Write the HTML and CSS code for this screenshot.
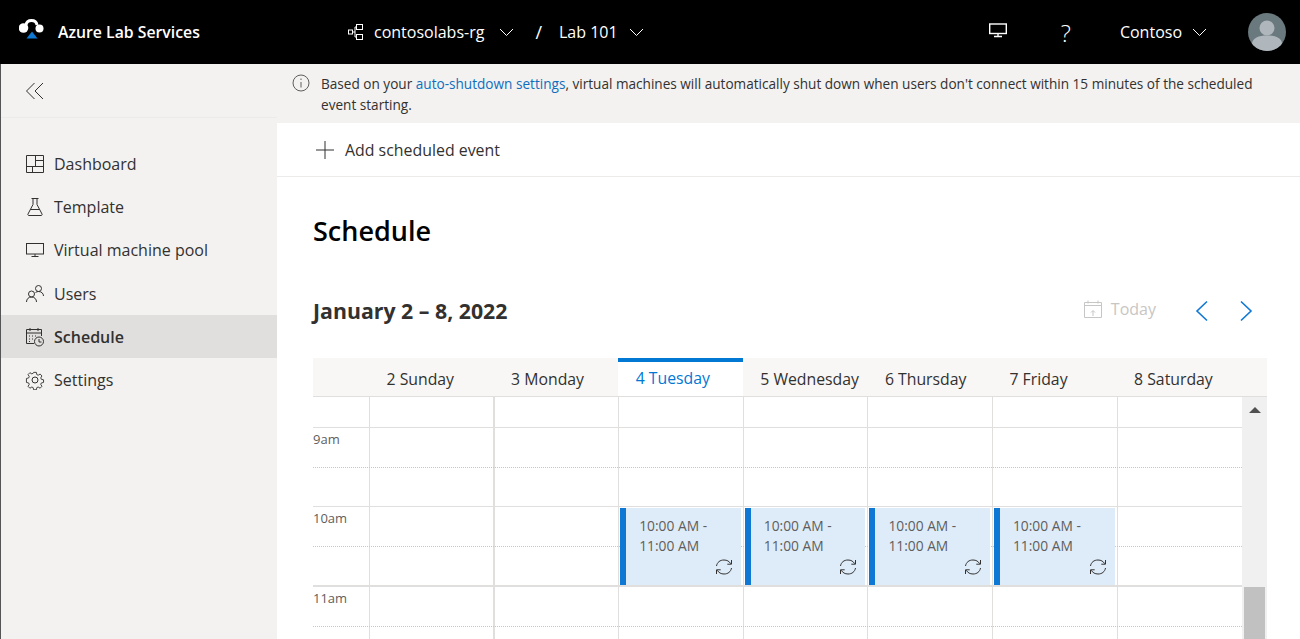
FILE: index.html
```html
<!DOCTYPE html>
<html lang="en">
<head>
  <meta charset="UTF-8">
  <meta name="viewport" content="width=device-width, initial-scale=1.0">
  <title>Azure Lab Services - Schedule</title>
  <link rel="stylesheet" href="styles.css">
</head>
<body>

  <header class="topbar">
    <div class="brand">
      <svg class="brand-logo" width="26" height="20" viewBox="0 0 26 20">
        <circle cx="4.500" cy="9" r="4.800" fill="#fff"/>
        <circle cx="20.500" cy="9.500" r="4" fill="#fff"/>
        <path d="M7 6C7.500 2.800 9.500 1.500 12.500 1.500S17.500 2.800 18 6" fill="none" stroke="#fff" stroke-width="3"/>
        <path d="M13 12.500L18.500 19.500H7.500Z" fill="#0f78d4"/>
      </svg>
      <span class="brand-name">Azure Lab Services</span>
    </div>
    <nav class="crumbs">
      <svg class="crumb-icon" width="18" height="18" viewBox="0 0 18 18" fill="none" stroke="#fff">
        <rect x="9.500" y="1.500" width="6" height="5"/>
        <rect x="9.500" y="11.500" width="6" height="5"/>
        <rect x="1.500" y="7" width="4" height="4"/>
        <path d="M5.500 9H8M8 4V14M8 4H9.500M8 14H9.500"/>
      </svg>
      <span>contosolabs-rg</span>
      <svg class="chevron" width="15" height="9" viewBox="0 0 15 9"><path d="M1 1l6.500 6.500L14 1"/></svg>
      <span class="crumb-sep">/</span>
      <span>Lab 101</span>
      <svg class="chevron chevron-tight" width="15" height="9" viewBox="0 0 15 9"><path d="M1 1l6.500 6.500L14 1"/></svg>
    </nav>
    <div class="topbar-right">
      <svg class="monitor" width="18" height="15" viewBox="0 0 18 15" fill="none" stroke="#fff">
        <rect x="0.700" y="1" width="16.600" height="9.500" stroke-width="1.400"/>
        <path d="M9 11v2M5 13.500h8" stroke-width="1.400"/>
      </svg>
      <span class="help">?</span>
      <span class="tenant">Contoso</span>
      <svg class="chevron" width="15" height="9" viewBox="0 0 15 9"><path d="M1 1l6.500 6.500L14 1"/></svg>
      <div class="avatar">
        <svg width="38" height="38" viewBox="0 0 38 38">
          <circle cx="19" cy="15" r="7.500" fill="#b0b7bc"/>
          <path d="M4 38V31C4 25 11 22.500 19 22.500S34 25 34 31V38Z" fill="#b0b7bc"/>
        </svg>
      </div>
    </div>
  </header>

  <div class="layout">
    <aside class="sidebar">
      <div class="collapse-row">
        <svg width="20" height="18" viewBox="0 0 20 18" fill="none" stroke="#323130">
          <path d="M9.500 1L1.500 9l8 8M18 1l-8 8 8 8"/>
        </svg>
      </div>
      <ul class="nav-list">
        <li class="nav-item">
          <svg class="nav-icon" width="20" height="20" viewBox="0 0 20 20" fill="none" stroke="#323130">
            <path d="M1.500 1.500h17v17h-17zM1.500 12.500h17M10.500 1.500v11M10.500 6.500h8M7.500 12.500v6"/>
          </svg>
          <span>Dashboard</span>
        </li>
        <li class="nav-item">
          <svg class="nav-icon" width="20" height="20" viewBox="0 0 20 20" fill="none" stroke="#323130">
            <path d="M6.500 1.500h7M8 1.500v6L3 17a1 1 0 0 0 1 1.500h12a1 1 0 0 0 1-1.500L12 7.500v-6M5.500 12.500h9"/>
          </svg>
          <span>Template</span>
        </li>
        <li class="nav-item">
          <svg class="nav-icon" width="20" height="20" viewBox="0 0 20 20" fill="none" stroke="#323130">
            <rect x="1.500" y="3.500" width="17" height="10.500"/>
            <path d="M10 14v3M6.500 16.500h7"/>
          </svg>
          <span>Virtual machine pool</span>
        </li>
        <li class="nav-item">
          <svg class="nav-icon" width="20" height="20" viewBox="0 0 20 20" fill="none" stroke="#323130">
            <circle cx="13.500" cy="4.500" r="3"/>
            <circle cx="6.500" cy="10" r="3"/>
            <path d="M1.500 18c0-3 2-5 5-5s5 2 5 5M10.500 8.500c1-.7 2-1 3-1 3 0 5 2 5 4.500"/>
          </svg>
          <span>Users</span>
        </li>
        <li class="nav-item nav-item-active">
          <svg class="nav-icon" width="20" height="20" viewBox="0 0 20 20" fill="none" stroke="#323130">
            <path d="M9 16.500H1.500v-14h15V9M1.500 6h15M5 1v3M13 1v3"/>
            <path d="M4 9h1M7 9h1M10 9h1M4 12h1M7 12h1M4 14.500h1" stroke-dasharray="1 1"/>
            <circle cx="14" cy="14.500" r="4.500"/>
            <path d="M14 12v3h2.500"/>
          </svg>
          <span>Schedule</span>
        </li>
        <li class="nav-item">
          <svg class="nav-icon" width="20" height="20" viewBox="0 0 20 20" fill="none" stroke="#323130">
            <circle cx="10" cy="10" r="3"/>
            <path d="M8.500 1.500h3l.5 2.500 1.500.7 2.200-1.300 2 2.100-1.300 2.200.6 1.500 2.500.6v2.900l-2.500.6-.6 1.500 1.300 2.200-2 2.100-2.200-1.300-1.500.7-.5 2.400h-3l-.5-2.400-1.500-.7-2.200 1.300-2-2.100 1.300-2.200-.6-1.500-2.500-.6V8.300l2.500-.6.600-1.500-1.300-2.200 2-2.100 2.200 1.300 1.500-.7z" transform="translate(1 1) scale(.9)"/>
          </svg>
          <span>Settings</span>
        </li>
      </ul>
    </aside>

    <main class="content">
      <div class="info-bar">
        <svg class="info-icon" width="18" height="18" viewBox="0 0 18 18" fill="none" stroke="#605e5c">
          <circle cx="9" cy="9" r="8"/>
          <path d="M9 8v5.500M9 4.500v1.500"/>
        </svg>
        <p>Based on your <a href="#">auto-shutdown settings</a>, virtual machines will automatically shut down when users don't connect within 15 minutes of the scheduled event starting.</p>
      </div>

      <div class="toolbar">
        <svg width="20" height="20" viewBox="0 0 20 20" stroke="#323130"><path d="M10 1v18M1 10h18"/></svg>
        <span>Add scheduled event</span>
      </div>

      <section class="schedule">
        <h1>Schedule</h1>
        <div class="week-bar">
          <h2>January 2 – 8, 2022</h2>
          <div class="today">
            <svg width="18" height="18" viewBox="0 0 18 18" fill="none" stroke="#c8c6c4">
              <path d="M.5 2.500h17v15H.5zM.5 5.500h17M4 .5v3M14 .5v3M9 16v-5M7 12.500l2-2 2 2"/>
            </svg>
            <span>Today</span>
          </div>
          <div class="week-arrows">
            <svg width="14" height="22" viewBox="0 0 14 22" fill="none" stroke="#0f78d4" stroke-width="1.600"><path d="M12 1.500L2 11l10 9.500"/></svg>
            <svg width="14" height="22" viewBox="0 0 14 22" fill="none" stroke="#0f78d4" stroke-width="1.600"><path d="M2 1.500L12 11 2 20.500"/></svg>
          </div>
        </div>

        <div class="calendar">
          <div class="day-header">
            <div class="day-gutter"></div>
            <div class="day-name">2 Sunday</div>
            <div class="day-name">3 Monday</div>
            <div class="day-name day-today">4 Tuesday</div>
            <div class="day-name">5 Wednesday</div>
            <div class="day-name">6 Thursday</div>
            <div class="day-name">7 Friday</div>
            <div class="day-name">8 Saturday</div>
          </div>
          <div class="calendar-body">
            <div class="grid-scroll">
              <div class="hour-row hour-top">
                <div class="time"></div>
                <div class="cell cell-sep"></div><div class="cell"></div><div class="cell"></div><div class="cell"></div><div class="cell"></div><div class="cell"></div><div class="cell"></div>
              </div>
              <div class="hour-row">
                <div class="time">9am</div>
                <div class="cell cell-sep"></div><div class="cell"></div><div class="cell"></div><div class="cell"></div><div class="cell"></div><div class="cell"></div><div class="cell"></div>
              </div>
              <div class="hour-row hour-row-thick">
                <div class="time">10am</div>
                <div class="cell cell-sep"></div>
                <div class="cell"></div>
                <div class="cell">
                  <div class="event">10:00 AM - 11:00 AM
                    <svg class="event-repeat" width="18" height="18" viewBox="0 0 18 18" fill="none" stroke="#323130"><path d="M1.500 8C2.200 4.200 5 2 9 2c3 0 5.300 1.300 6.700 3.700M16.500 10c-.7 3.800-3.500 6-7.500 6-3 0-5.300-1.300-6.700-3.700M16.500 2v4.200h-4.200M1.500 16v-4.200h4.200"/></svg>
                  </div>
                </div>
                <div class="cell">
                  <div class="event">10:00 AM - 11:00 AM
                    <svg class="event-repeat" width="18" height="18" viewBox="0 0 18 18" fill="none" stroke="#323130"><path d="M1.500 8C2.200 4.200 5 2 9 2c3 0 5.300 1.300 6.700 3.700M16.500 10c-.7 3.800-3.500 6-7.500 6-3 0-5.300-1.300-6.700-3.700M16.500 2v4.200h-4.200M1.500 16v-4.200h4.200"/></svg>
                  </div>
                </div>
                <div class="cell">
                  <div class="event">10:00 AM - 11:00 AM
                    <svg class="event-repeat" width="18" height="18" viewBox="0 0 18 18" fill="none" stroke="#323130"><path d="M1.500 8C2.200 4.200 5 2 9 2c3 0 5.300 1.300 6.700 3.700M16.500 10c-.7 3.800-3.500 6-7.500 6-3 0-5.300-1.300-6.700-3.700M16.500 2v4.200h-4.200M1.500 16v-4.200h4.200"/></svg>
                  </div>
                </div>
                <div class="cell">
                  <div class="event">10:00 AM - 11:00 AM
                    <svg class="event-repeat" width="18" height="18" viewBox="0 0 18 18" fill="none" stroke="#323130"><path d="M1.500 8C2.200 4.200 5 2 9 2c3 0 5.300 1.300 6.700 3.700M16.500 10c-.7 3.800-3.500 6-7.500 6-3 0-5.300-1.300-6.700-3.700M16.500 2v4.200h-4.200M1.500 16v-4.200h4.200"/></svg>
                  </div>
                </div>
                <div class="cell"></div>
              </div>
              <div class="hour-row">
                <div class="time">11am</div>
                <div class="cell cell-sep"></div><div class="cell"></div><div class="cell"></div><div class="cell"></div><div class="cell"></div><div class="cell"></div><div class="cell"></div>
              </div>
            </div>
            <div class="scrollbar">
              <div class="scroll-up"></div>
              <div class="scroll-track"></div>
              <div class="scroll-thumb"></div>
            </div>
          </div>
        </div>
      </section>
    </main>
  </div>

</body>
</html>
```

FILE: styles.css
```css
html, body {
  height: 100%;
}

body {
  margin: 0;
  overflow: hidden;
  font-family: "Open Sans", "Noto Sans", sans-serif;
  color: #323130;
  background-color: #fff;
}

h1, h2, p, ul {
  margin: 0;
  padding: 0;
}

svg {
  display: block;
  flex: none;
}

/* top bar */
.topbar {
  display: flex;
  align-items: center;
  height: 64px;
  background-color: #000;
  color: #fff;
  font-size: 16px;
}

.brand {
  display: flex;
  align-items: center;
  width: 347px;
  padding-left: 19px;
  box-sizing: border-box;
}

.brand-logo {
  margin: 0 13px 6px 0;
}

.brand-name {
  font-weight: 600;
  font-size: 15.8px;
}

.crumbs {
  display: flex;
  align-items: center;
}

.crumb-icon {
  margin-right: 9px;
}

.chevron {
  fill: none;
  stroke: #fff;
}

.crumbs .chevron {
  margin-left: 15px;
}

.crumbs .chevron-tight {
  margin-left: 11px;
}

.crumb-sep {
  margin: 0 17px 0 21px;
  font-size: 18px;
}

.topbar-right {
  display: flex;
  align-items: center;
  margin-left: auto;
  padding-right: 14px;
}

.monitor {
  margin-bottom: 3px;
}

.help {
  margin: 0 49px 0 54px;
  font-size: 24px;
  font-weight: 300;
}

.tenant {
  margin-right: 10px;
}

.avatar {
  width: 38px;
  height: 38px;
  margin-left: 41px;
  border-radius: 50%;
  overflow: hidden;
  background-color: #69797e;
}

/* sidebar */
.layout {
  display: flex;
  height: calc(100% - 64px);
}

.sidebar {
  width: 277px;
  flex: none;
  box-sizing: border-box;
  border-left: 1px solid #555;
  background-color: #f3f2f1;
}

.collapse-row {
  display: flex;
  align-items: center;
  height: 53px;
  padding-left: 24px;
  border-bottom: 1px solid #edebe9;
}

.nav-list {
  list-style: none;
  padding-top: 24px;
}

.nav-item {
  display: flex;
  align-items: center;
  gap: 9px;
  height: 43.3px;
  padding-left: 24px;
  font-size: 16px;
}

.nav-item-active {
  background-color: #e1dfdd;
  font-weight: 600;
}

/* main area */
.content {
  flex: 1;
  min-width: 0;
}

.info-bar {
  display: flex;
  height: 59px;
  box-sizing: border-box;
  padding: 10px 30px 0 15px;
  background-color: #f3f2f1;
  font-size: 13.6px;
  line-height: 20.5px;
}

.info-icon {
  margin-right: 11px;
}

.info-bar a {
  color: #106ebe;
  text-decoration: none;
}

.toolbar {
  display: flex;
  align-items: center;
  gap: 10px;
  height: 53px;
  padding-left: 38px;
  border-bottom: 1px solid #edebe9;
  font-size: 15.9px;
}

.schedule {
  padding: 0 33px 0 36px;
}

.schedule h1 {
  padding-top: 34px;
  font-size: 27px;
  line-height: 40px;
  font-weight: 600;
  color: #000;
}

.week-bar {
  display: flex;
  align-items: center;
  height: 40px;
  margin-top: 40px;
}

.week-bar h2 {
  margin-bottom: 1px;
  font-size: 21.3px;
  font-weight: 700;
}

.today {
  display: flex;
  align-items: center;
  gap: 9px;
  margin: 0 0 4px auto;
  color: #c8c6c4;
  font-size: 16px;
}

.week-arrows {
  display: flex;
  gap: 30px;
  margin: 0 14px 0 39px;
}

/* calendar */
.calendar {
  margin-top: 27px;
}

.day-header {
  display: grid;
  grid-template-columns: 56px repeat(7, 124.6px) 25px;
  height: 39px;
  box-sizing: border-box;
  border-bottom: 1px solid #e1dfdd;
  background-color: #f8f7f5;
  font-size: 15.8px;
}

.day-name {
  padding: 10px 0 0 17.5px;
  line-height: 22px;
}

.day-today {
  padding-top: 5px;
  border-top: 4px solid #0078d4;
  background-color: #fff;
  color: #0078d4;
}

.calendar-body {
  display: flex;
  height: 243px;
  overflow: hidden;
}

.grid-scroll {
  width: 929px;
  flex: none;
}

.hour-row {
  position: relative;
  display: grid;
  grid-template-columns: 56px repeat(7, 124.6px);
  height: 79px;
  box-sizing: border-box;
  border-bottom: 1px solid #e1dfdd;
}

/* half hour line */
.hour-row::after {
  content: "";
  position: absolute;
  top: 39px;
  left: 0;
  right: 0;
  border-top: 1px dotted #c8c6c4;
}

.hour-top {
  height: 31px;
}

.hour-top::after {
  display: none;
}

.hour-row-thick {
  height: 80px;
  border-bottom-width: 2px;
}

.time {
  padding-top: 2px;
  font-size: 13px;
  line-height: 18px;
  color: #605e5c;
}

.cell {
  position: relative;
  border-left: 1px solid #e1dfdd;
}

.cell-sep {
  border-right: 1px solid #e1dfdd;
}

.event {
  position: absolute;
  top: 1px;
  left: 1px;
  right: 2px;
  bottom: 0;
  z-index: 1;
  box-sizing: border-box;
  padding: 8px 16px 0 13px;
  border-left: 6px solid #0f78d4;
  background-color: #deecf9;
  color: #605e5c;
  font-size: 13.8px;
  line-height: 20px;
}

.event-repeat {
  position: absolute;
  right: 8px;
  bottom: 9px;
}

/* scrollbar */
.scrollbar {
  display: flex;
  flex-direction: column;
  width: 25px;
  background-color: #f0f0f0;
}

.scroll-up {
  width: 0;
  height: 0;
  margin: 10px auto 0;
  border: 6px solid transparent;
  border-top: 0;
  border-bottom: 6px solid #505050;
}

.scroll-track {
  height: 174px;
}

.scroll-thumb {
  flex: 1;
  margin: 0 2px;
  background-color: #c1c1c1;
}
```
